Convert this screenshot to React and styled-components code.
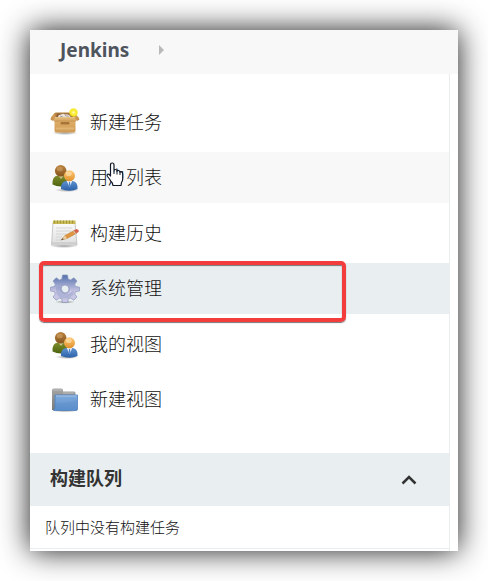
import React from 'react';
import styled, { createGlobalStyle, css } from 'styled-components';

const GlobalStyle = createGlobalStyle`
  *, *::before, *::after { box-sizing: border-box; }
  body {
    margin: 0;
    background: #fff;
    color: #333;
    font-family: "Noto Sans", "Noto Sans CJK SC", sans-serif;
  }
`;

const Window = styled.div`
  margin: 30px;
  background: #fff;
  box-shadow: 0 0 28px rgba(0, 0, 0, 0.9);
`;

const Breadcrumbs = styled.nav`
  display: flex;
  align-items: center;
  gap: 30px;
  height: 44px;
  padding: 0 30px 4px;
  background: #f8f8f8;
`;

const Brand = styled.a`
  color: #4d545d;
  font-family: "Noto Sans", sans-serif;
  font-size: 19px;
  font-weight: 700;
  line-height: 24px;
  text-decoration: none;
`;

const CrumbArrow = styled.svg`
  width: 5px;
  height: 10px;
  fill: #b9b9b9;
`;

const SidePanel = styled.aside`
  margin-right: 8px;
  padding: 23px 0 2px;
  border-right: 1px solid #eaeded;
`;

const TaskList = styled.ul`
  margin: 0 0 28px;
  padding: 0;
  list-style: none;
`;

const Task = styled.li`
  position: relative;
  margin-bottom: 4px;
  &:nth-child(even) { margin-bottom: 5px; }
  &:last-child { margin-bottom: 0; }
`;

const tones = { hover: '#f8f8f8', active: '#e9eef1' };

const TaskLink = styled.a`
  display: flex;
  align-items: center;
  gap: 10px;
  height: 51px;
  padding: 0 20px;
  color: #111;
  text-decoration: none;
  ${({ $tone }) => $tone && css`background: ${tones[$tone]};`}
`;

const TaskLabel = styled.span`
  padding-bottom: 3px;
  font-family: "Noto Sans CJK SC", sans-serif;
  font-size: 18px;
  font-weight: 300;
  line-height: 26px;
`;

const TaskIcon = styled.svg`
  flex: none;
  width: 30px;
  height: 30px;
`;

const Highlight = styled.span`
  position: absolute;
  inset: -2px 103px -8px 9px;
  border: 4px solid #f33c3c;
  border-radius: 5px;
  box-shadow: 0 1px 1px #777, inset 0 1px 1px #777;
  pointer-events: none;
  z-index: 1;
`;

const Pointer = styled.svg`
  position: absolute;
  left: 76px;
  top: 10px;
  width: 18px;
  height: 25px;
  pointer-events: none;
`;

const QueueHeader = styled.header`
  display: flex;
  align-items: center;
  justify-content: space-between;
  height: 53px;
  padding: 0 32px 0 20px;
  background: #e9eef1;
`;

const QueueTitle = styled.h2`
  margin: 0;
  padding-bottom: 5px;
  font-family: "Noto Sans CJK SC", sans-serif;
  font-size: 18px;
  line-height: 26px;
  font-weight: 700;
`;

const CollapseButton = styled.button`
  display: flex;
  padding: 0;
  border: 0;
  background: none;
  svg { width: 16px; height: 16px; }
`;

const QueueEmpty = styled.p`
  margin: 0;
  padding: 10px 15px;
  border-bottom: 1px solid #e9eef1;
  color: #111;
  font-family: "Noto Sans CJK SC", sans-serif;
  font-size: 15px;
  line-height: 22px;
  font-weight: 300;
`;

const IconDefs = styled.svg`
  position: absolute;
  width: 0;
  height: 0;
`;

function Gradients() {
  const list = [
    ['boxFront', '#e2b36c', '#d09a54'],
    ['boxFlap', '#d9a762', '#c08a48'],
    ['skinDark', '#bb8240', '#85551d'],
    ['skin', '#ffc775', '#e0922c'],
    ['olive', '#7f8c2c', '#4c6410'],
    ['blue', '#5d92d0', '#2c60a8'],
    ['paper', '#fbfbfb', '#dedede'],
    ['gear', '#5270aa', '#c9c6e4'],
    ['folderBack', '#a6a6a6', '#7a7a7a'],
    ['folderFront', '#7fa9da', '#5f92cf'],
  ];
  return (
    <IconDefs aria-hidden="true">
      <defs>
        {list.map(([id, a, b]) => (
          <linearGradient key={id} id={id} x1="0" y1="0" x2="0" y2="1">
            <stop offset="0" stopColor={a} />
            <stop offset={id === 'gear' ? '0.6' : '1'} stopColor={b} />
          </linearGradient>
        ))}
        <radialGradient id="glow">
          <stop offset="0" stopColor="#fffbc0" />
          <stop offset="0.3" stopColor="#fbf05a" />
          <stop offset="0.65" stopColor="#f7e81c" />
          <stop offset="1" stopColor="#f7e81c" stopOpacity="0" />
        </radialGradient>
        <radialGradient id="ground">
          <stop offset="0" stopColor="#000" stopOpacity="0.4" />
          <stop offset="1" stopColor="#000" stopOpacity="0" />
        </radialGradient>
      </defs>
    </IconDefs>
  );
}

function BoxIcon() {
  return (
    <TaskIcon viewBox="0 0 30 30" aria-hidden="true">
      <ellipse cx="15" cy="25" rx="13" ry="2" fill="url(#ground)" />
      <path d="M4 6Q4 4.500 6 4.500H23Q25 4.500 25.500 6L26 10H3Z" fill="#b98445" />
      <path d="M7 5.500H22L23 9.500H6Z" fill="#8d5f32" />
      <path d="M8 9.500Q8 6.500 11 6.500Q13 5 15 6.500Q19 5.500 21 9.500Z" fill="#e8e2db" />
      <path d="M10 8L13 9M15 7.500L19 8.500" stroke="#aaa39a" />
      <path d="M4.500 10H25.500V22.500Q25.500 24.500 24 24.500H6Q4.500 24.500 4.500 22.500Z" fill="url(#boxFront)" />
      <path d="M4 5.500L6 10L3 13L.5 11.500Q1 8.500 4 5.500Z" fill="url(#boxFlap)" />
      <path d="M25 5.500L24 10L27 13L29.500 11.500Q28.500 8.500 25 5.500Z" fill="url(#boxFlap)" />
      <path d="M5 9.500H25L27 12.500H3Z" fill="#dcae6c" />
      <path d="M5 9.700H25" stroke="#ecc88f" />
      <path d="M4 13H26" stroke="#c08c49" strokeWidth=".8" />
      <rect x="10.500" y="14" width="9" height="2.500" rx="1.200" fill="#a8743a" />
      <path d="M6 20.500H24" stroke="#edc88c" strokeWidth="2" opacity=".5" />
      <circle cx="23.500" cy="4.500" r="5" fill="url(#glow)" />
    </TaskIcon>
  );
}

function PeopleIcon() {
  return (
    <TaskIcon viewBox="0 0 30 30" aria-hidden="true">
      <ellipse cx="17" cy="27" rx="12" ry="2" fill="url(#ground)" />
      <path d="M2.500 21.500Q2 13 8 12.500H14Q18 14 18.500 22Q10 25 2.500 21.500Z" fill="url(#olive)" />
      <path d="M8.500 13L11 16L13.500 13Z" fill="#c9c48c" />
      <circle cx="10.700" cy="7.800" r="5.800" fill="url(#skinDark)" />
      <ellipse cx="9.800" cy="6" rx="3" ry="2.300" fill="#d8ac70" opacity=".5" />
      <path d="M11 26Q10.500 18.500 16.500 18H23Q28 19 27.500 26Q20 29.500 11 26Z" fill="url(#blue)" />
      <path d="M16.500 17.500L19.500 24L22.500 17.500Z" fill="#e9eef8" />
      <path d="M19 19L18.700 22L19.500 24L20.300 22L20 19Z" fill="#4c82c4" />
      <circle cx="19.500" cy="12.800" r="5.500" fill="url(#skin)" />
      <ellipse cx="18.700" cy="10.800" rx="3" ry="2.300" fill="#ffe7b8" opacity=".6" />
    </TaskIcon>
  );
}

function NotepadIcon() {
  return (
    <TaskIcon viewBox="0 0 30 30" aria-hidden="true">
      <ellipse cx="14" cy="27" rx="14" ry="2" fill="url(#ground)" />
      <path d="M3 3.500H25L27 26H1.500Z" fill="url(#paper)" stroke="#bcbcbc" strokeWidth=".8" />
      <path d="M2 24H26.500" stroke="#bdbdbd" />
      <path d="M3 1.500H25.500V5H2.800Z" fill="#c9bb55" />
      <path d="M4.500 1.500V4.500M7.500 1.500V4.500M10.500 1.500V4.500M13.500 1.500V4.500M16.500 1.500V4.500M19.500 1.500V4.500M22.500 1.500V4.500" stroke="#a3953a" />
      <path d="M6 9H22M6 12H21M6 15H16M6 18H12M5.500 21H12" stroke="#cfcfcf" strokeWidth=".8" />
      <path d="M11 21L15 16.500L25 11L27 14L17 19.500Z" fill="#e0953f" stroke="#b5742c" strokeWidth=".5" />
      <path d="M15 16.500L17 19.500L11 21Z" fill="#e8cda0" />
      <path d="M11 21L13 19L13.500 20.500Z" fill="#444" />
      <path d="M24 11.500L26.500 10Q29.500 10.500 28.500 13L26 14.500Z" fill="#d4604c" />
      <path d="M23.500 11.800L25.600 14.900" stroke="#ccc" />
    </TaskIcon>
  );
}

function GearIcon() {
  return (
    <TaskIcon viewBox="0 0 30 30" aria-hidden="true">
      <ellipse cx="15" cy="28" rx="10" ry="1.700" fill="url(#ground)" />
      <path
        fill="url(#gear)"
        stroke="#8c98bf"
        strokeWidth=".7"
        strokeLinejoin="round"
        fillRule="evenodd"
        d="M12.500 1H17.500L18.200 5L20.500 6L24 3.700L27 7L24.700 10.300L25.600 12.500L29.500 13.200V17L25.600 17.700L24.700 20L27 23L23.800 26.200L20.500 24L18.200 25L17.500 28.500H12.500L11.800 25L9.500 24L6.200 26.200L3 23L5.300 20L4.400 17.700L.5 17V13.200L4.400 12.500L5.300 10.300L3 7L6.200 3.700L9.500 6L11.800 5ZM15 11A4 4 0 1 0 15 19A4 4 0 1 0 15 11Z"
      />
      <path d="M6 14Q10 10 13 17Q17 23 24 16L23 21L18 24.500H11L6.500 20Z" fill="#7f8fbd" opacity=".35" />
      <circle cx="15" cy="15" r="4.500" fill="none" stroke="#9aa1c6" strokeWidth=".8" />
    </TaskIcon>
  );
}

function FolderIcon() {
  return (
    <TaskIcon viewBox="0 0 30 30" aria-hidden="true">
      <ellipse cx="15" cy="25.500" rx="13" ry="2" fill="url(#ground)" />
      <path d="M2 5Q2 3.500 4 3.500H11Q13 3.500 13 5V6.500H24Q25.500 6.500 25.500 8V25H2Z" fill="url(#folderBack)" />
      <path d="M3 5H12M13 8H24" stroke="#bcbcbc" />
      <path d="M5 10H27.500V24Q27.500 25.500 26 25.500H3.500Q4.800 24.500 5 22Z" fill="url(#folderFront)" stroke="#4f80bd" strokeWidth=".8" />
      <path d="M6 11H26.500" stroke="#a3c3e8" />
      <path d="M5.500 18Q17 18 27 15V25H5Z" fill="#3d74b8" opacity=".15" />
    </TaskIcon>
  );
}

function HandPointer() {
  return (
    <Pointer viewBox="0 0 18 25" aria-hidden="true">
      <path d="M4.500 14V3Q4.500 1 6.200 1Q8 1 8 3V9Q8 7.500 9.600 7.500Q11 7.500 11 9.500Q11.200 8.300 12.500 8.500Q14 8.700 14 10.500Q14.300 9.500 15.400 9.800Q16.700 10 16.700 12V17Q16.700 19 15.500 20.500L15 23.500H7L6.300 21Q4.500 19 3.500 17L1.500 14.500Q.6 13 1.700 12.200Q3 11.500 4.500 14Z" fill="#fff" stroke="#111827" strokeWidth="1.200" strokeLinejoin="round" />
      <path d="M8 9V12M11 9.500V12.500M14 10.500V13" fill="none" stroke="#111827" />
    </Pointer>
  );
}

const tasks = [
  { label: '新建任务', Icon: BoxIcon },
  { label: '用户列表', Icon: PeopleIcon, tone: 'hover', pointed: true },
  { label: '构建历史', Icon: NotepadIcon },
  { label: '系统管理', Icon: GearIcon, tone: 'active', marked: true },
  { label: '我的视图', Icon: PeopleIcon },
  { label: '新建视图', Icon: FolderIcon },
];

export default function App() {
  return (
    <>
      <GlobalStyle />
      <Gradients />
      <Window>
        <Breadcrumbs>
          <Brand href="#home">Jenkins</Brand>
          <CrumbArrow viewBox="0 0 5 10" aria-hidden="true">
            <path d="M0 0L5 5L0 10Z" />
          </CrumbArrow>
        </Breadcrumbs>
        <SidePanel>
          <TaskList>
            {tasks.map(({ label, Icon, tone, pointed, marked }) => (
              <Task key={label}>
                <TaskLink href="#task" $tone={tone}>
                  <Icon />
                  <TaskLabel>{label}</TaskLabel>
                </TaskLink>
                {pointed && <HandPointer />}
                {marked && <Highlight />}
              </Task>
            ))}
          </TaskList>
          <section>
            <QueueHeader>
              <QueueTitle>构建队列</QueueTitle>
              <CollapseButton type="button" aria-label="构建队列">
                <svg viewBox="0 0 16 16" fill="none" stroke="#333" strokeWidth="2.500">
                  <path d="M1.500 11.500L8 5L14.500 11.500" />
                </svg>
              </CollapseButton>
            </QueueHeader>
            <QueueEmpty>队列中没有构建任务</QueueEmpty>
          </section>
        </SidePanel>
      </Window>
    </>
  );
}
